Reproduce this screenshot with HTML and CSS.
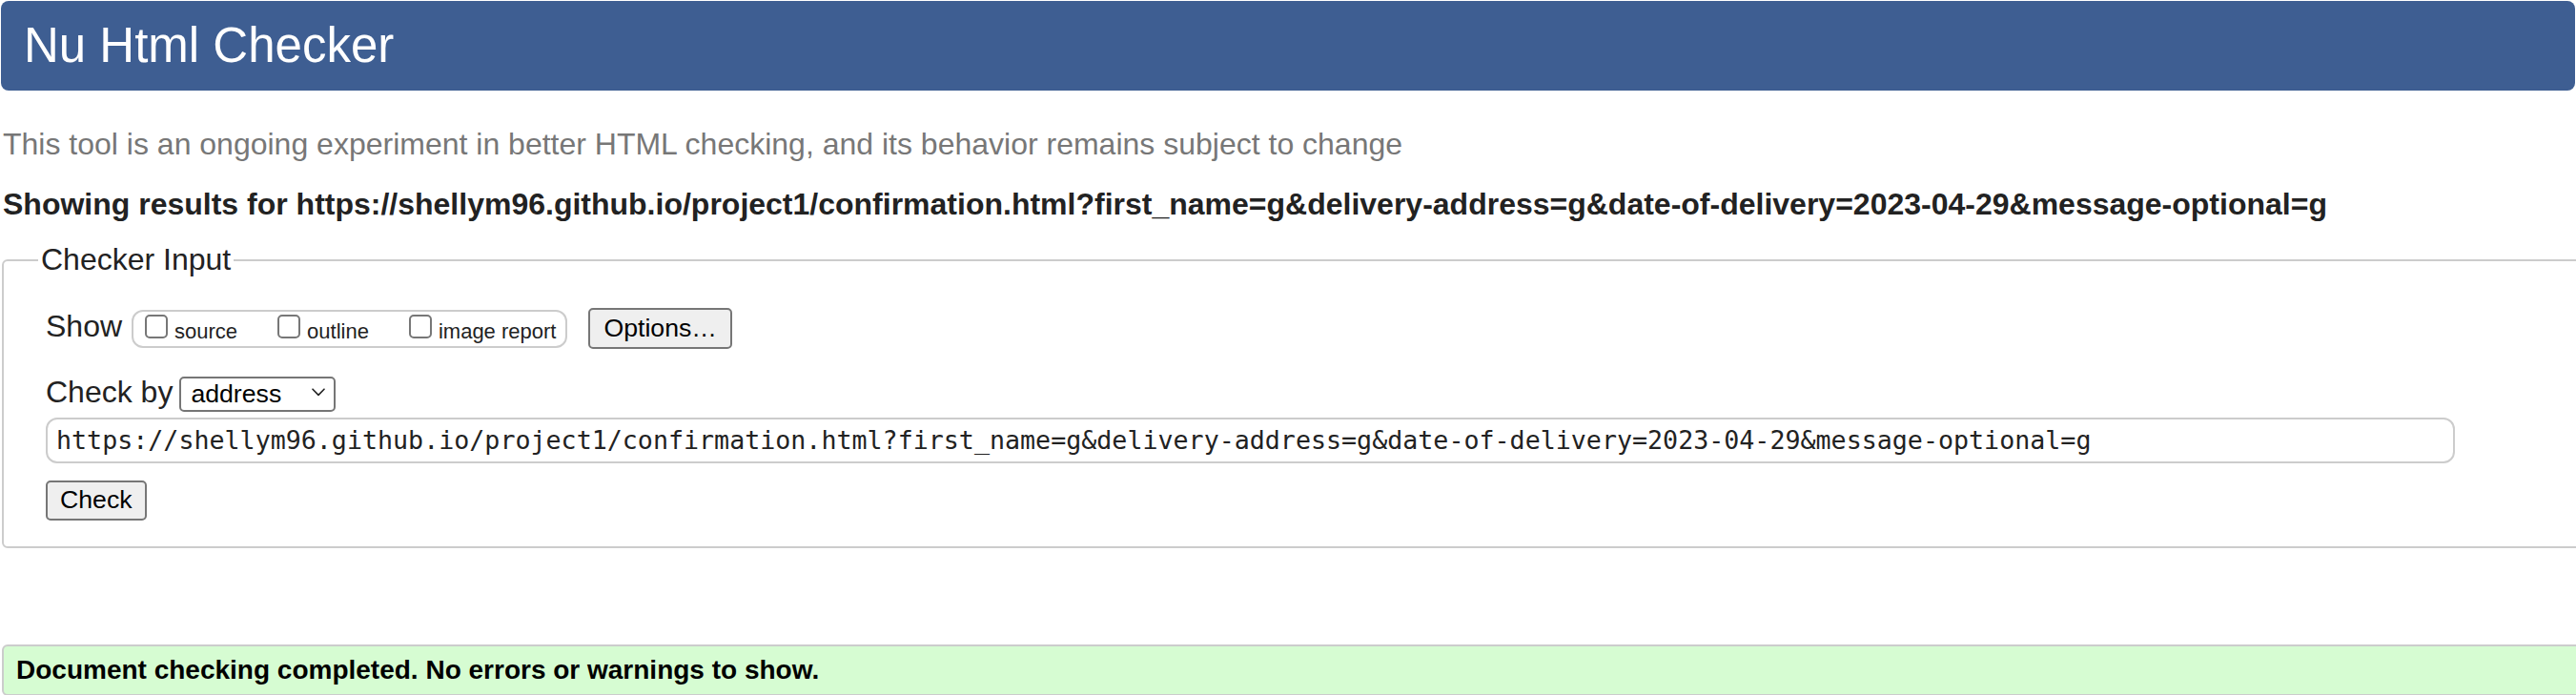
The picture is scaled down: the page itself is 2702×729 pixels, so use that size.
FILE: index.html
```html
<!DOCTYPE html>
<html lang="en">
<head>
<meta charset="utf-8">
<title>Nu Html Checker</title>
<link rel="stylesheet" href="styles.css">
</head>
<body>
<h1 class="banner">Nu Html Checker</h1>
<p class="intro">This tool is an ongoing experiment in better HTML checking, and its behavior remains subject to change</p>
<p class="showing">Showing results for https://shellym96.github.io/project1/confirmation.html?first_name=g&amp;delivery-address=g&amp;date-of-delivery=2023-04-29&amp;message-optional=g</p>
<form class="checker">
  <fieldset class="inputs">
    <legend class="inputs-legend">Checker Input</legend>
    <div class="show-row">
      <span class="row-label show-label">Show</span>
      <div class="show-group">
        <label class="opt"><input type="checkbox" class="box"><span>source</span></label>
        <label class="opt"><input type="checkbox" class="box"><span>outline</span></label>
        <label class="opt"><input type="checkbox" class="box"><span>image report</span></label>
      </div>
      <button type="button" class="btn btn-options">Options…</button>
    </div>
    <div class="checkby-row">
      <label class="row-label" for="docselect">Check by</label>
      <div class="select-wrap">
        <select id="docselect" class="doc-select"><option>address</option></select>
        <svg class="chevron" width="14" height="9" viewBox="0 0 14 9" aria-hidden="true"><path d="M1 1.2 L7 7.4 L13 1.2" fill="none" stroke="#222" stroke-width="1.6" stroke-linecap="round" stroke-linejoin="round"/></svg>
      </div>
    </div>
    <input class="url" type="url" value="https://shellym96.github.io/project1/confirmation.html?first_name=g&amp;delivery-address=g&amp;date-of-delivery=2023-04-29&amp;message-optional=g">
    <div class="submit-row"><button type="button" class="btn btn-check">Check</button></div>
  </fieldset>
</form>
<div class="result">Document checking completed. No errors or warnings to show.</div>
</body>
</html>
```
FILE: styles.css
```css
html, body {
  margin: 0;
  padding: 0;
  overflow: hidden;
}
body {
  width: 2702px;
  font-family: "Liberation Sans", Arial, sans-serif;
  font-size: 32px;
  color: #222;
  background: #fff;
}
.banner {
  margin: 1px 1px 0;
  height: 94px;
  box-sizing: border-box;
  background: #3e5e92;
  color: #fff;
  border-radius: 8px;
  font-weight: normal;
  font-size: 51px;
  line-height: 94px;
  padding-left: 24px;
}
.intro {
  margin: 38px 0 0 3px;
  color: #777;
  line-height: 37px;
}
.showing {
  margin: 26px 0 0 3px;
  font-weight: bold;
  line-height: 37px;
}
.checker {
  margin: 21px 0 0 0;
}
.inputs {
  margin: 0 -6px 0 2px;
  border: 2px solid #ccc;
  border-radius: 6px;
  padding: 32px 0 27px 44px;
  min-width: 0;
}
.inputs-legend {
  padding: 0 3px;
  margin-left: -8px;
  line-height: 37px;
}
.show-row {
  display: flex;
  align-items: center;
  height: 43px;
}
.row-label {
  line-height: 37px;
}
.show-label {
  margin-right: 10px;
  margin-bottom: 4px;
}
.show-group {
  display: flex;
  align-items: center;
  gap: 42px;
  height: 40px;
  box-sizing: border-box;
  border: 2px solid #ccc;
  border-radius: 12px;
  padding: 0 10px 0 12px;
  font-size: 22px;
}
.opt {
  display: flex;
  align-items: baseline;
  gap: 7px;
  line-height: 25px;
}
.box {
  appearance: none;
  -webkit-appearance: none;
  width: 24px;
  height: 25px;
  margin: 0;
  box-sizing: border-box;
  border: 2px solid #777;
  border-radius: 5px;
  background: #fff;
}
.btn {
  font-family: "Liberation Sans", Arial, sans-serif;
  font-size: 26.67px;
  color: #000;
  background: #efefef;
  border: 2px solid #767676;
  border-radius: 5px;
  box-sizing: border-box;
}
.btn-options {
  margin-left: 22px;
  height: 43px;
  padding: 0 14px;
}
.checkby-row {
  display: flex;
  align-items: baseline;
  margin-top: 27px;
}
.select-wrap {
  position: relative;
  margin-left: 7px;
}
.doc-select {
  appearance: none;
  -webkit-appearance: none;
  width: 164px;
  height: 37px;
  box-sizing: border-box;
  border: 2px solid #767676;
  border-radius: 5px;
  background: #fff;
  color: #000;
  font-family: "Liberation Sans", Arial, sans-serif;
  font-size: 26.67px;
  padding: 0 0 0 10px;
  margin: 0;
}
.chevron {
  position: absolute;
  right: 11px;
  top: 14px;
  pointer-events: none;
}
.url {
  display: block;
  margin: 6px 0 0;
  width: 2527px;
  height: 48px;
  box-sizing: border-box;
  border: 2px solid #ccc;
  border-radius: 12px;
  padding: 0 9px;
  font-family: "DejaVu Sans Mono", "Liberation Mono", monospace;
  font-size: 26.67px;
  color: #222;
  background: #fff;
}
.submit-row {
  margin-top: 18px;
  display: flex;
}
.btn-check {
  height: 42px;
  padding: 0 13px;
}
.result {
  margin: 101px -6px 0 2px;
  border: 2px solid #ccc;
  border-radius: 6px;
  background: #d6fcd2;
  padding: 9px 13px;
  font-weight: bold;
  font-size: 28px;
  line-height: 32px;
  color: #000;
}
```
